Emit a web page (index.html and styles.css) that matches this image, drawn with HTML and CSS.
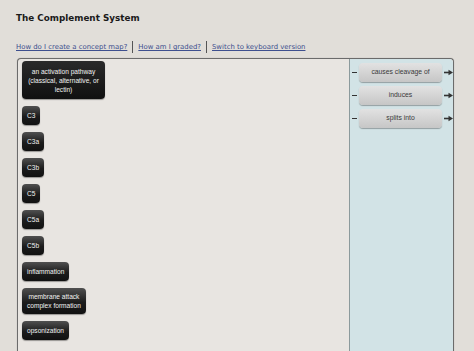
FILE: index.html
```html
<!DOCTYPE html>
<html>
<head>
<meta charset="utf-8">
<link rel="stylesheet" href="styles.css">
</head>
<body>
<div class="page">
  <h1 class="title">The Complement System</h1>
  <div class="links">
    <a href="#">How do I create a concept map?</a><span class="sep"></span><a href="#">How am I graded?</a><span class="sep"></span><a href="#">Switch to keyboard version</a>
  </div>
  <div class="board">
    <div class="canvas">
      <div class="node big">an activation pathway<br>(classical, alternative, or<br>lectin)</div>
      <div class="node">C3</div>
      <div class="node">C3a</div>
      <div class="node">C3b</div>
      <div class="node">C5</div>
      <div class="node">C5a</div>
      <div class="node">C5b</div>
      <div class="node">inflammation</div>
      <div class="node two">membrane attack<br>complex formation</div>
      <div class="node">opsonization</div>
    </div>
    <div class="tray">
      <div class="link"><span class="dash"></span><span class="pill">causes cleavage of</span><svg class="arrow" viewBox="0 0 9 7" width="9" height="7"><path d="M0 3.5H6" stroke="#333" stroke-width="1.6"/><polygon points="4.5,0.8 9,3.5 4.5,6.2" fill="#333"/></svg></div>
      <div class="link"><span class="dash"></span><span class="pill">induces</span><svg class="arrow" viewBox="0 0 9 7" width="9" height="7"><path d="M0 3.5H6" stroke="#333" stroke-width="1.6"/><polygon points="4.5,0.8 9,3.5 4.5,6.2" fill="#333"/></svg></div>
      <div class="link"><span class="dash"></span><span class="pill">splits into</span><svg class="arrow" viewBox="0 0 9 7" width="9" height="7"><path d="M0 3.5H6" stroke="#333" stroke-width="1.6"/><polygon points="4.5,0.8 9,3.5 4.5,6.2" fill="#333"/></svg></div>
    </div>
  </div>
</div>
</body>
</html>
```
FILE: styles.css
```css
html, body {
  margin: 0;
  padding: 0;
  background: #e1ded9;
  height: 100%;
  overflow: hidden;
}
.page {
  padding: 12px 0 0 16px;
  font-family: "DejaVu Sans", Verdana, sans-serif;
}
.title {
  margin: 0;
  font-size: 8.8px;
  font-weight: bold;
  color: #1a1a1a;
  line-height: 12px;
}
.links {
  margin-top: 17px;
  display: flex;
  align-items: center;
  font-size: 6.9px;
  line-height: 10px;
}
.links a {
  color: #3d4f8e;
  text-decoration: underline;
}
.sep {
  display: inline-block;
  width: 1px;
  height: 12px;
  background: #555;
  margin: 0 5px;
}
.board {
  margin: 5px 0 0 1px;
  width: 435px;
  height: 292px;
  border: 1px solid #6b6b6b;
  border-bottom: none;
  border-radius: 4px 4px 0 0;
  display: flex;
  background: #e8e5e1;
  box-shadow: 0 0 1px rgba(0,0,0,0.3);
}
.canvas {
  flex: 1;
  padding: 2px 0 0 4px;
  display: flex;
  flex-direction: column;
  align-items: flex-start;
  gap: 7px;
  font-family: "Liberation Sans", Arial, sans-serif;
}
.node {
  background: linear-gradient(#505050, #1c1c1c 55%, #111);
  color: #f2f2f2;
  font-size: 6.6px;
  line-height: 9px;
  border-radius: 4px;
  padding: 5px 5px;
  text-align: center;
  box-shadow: 0 1px 1px rgba(0,0,0,0.35);
}
.node.big {
  width: 75px;
  padding: 6px 4px 5px;
  background: linear-gradient(#2a2a2a, #101010);
}
.node.two {
  padding: 4px 5px;
}
.tray {
  width: 103px;
  background: #d2e3e6;
  border-left: 1px solid #8b9a9c;
  border-radius: 0 4px 0 0;
  padding-top: 4px;
  display: flex;
  flex-direction: column;
  gap: 4px;
  font-family: "Liberation Sans", Arial, sans-serif;
}
.link {
  display: flex;
  align-items: center;
  height: 19px;
}
.dash {
  width: 5px;
  height: 1.5px;
  background: #333;
  margin: 0 2px 0 2px;
  flex: none;
}
.pill {
  flex: none;
  width: 83px;
  height: 19px;
  line-height: 18px;
  text-align: center;
  font-size: 6.8px;
  color: #3a3a3a;
  border-radius: 4px;
  background: linear-gradient(#e2e2e2, #c6c6c6);
  box-shadow: 0 1px 1px rgba(0,0,0,0.3);
}
.arrow {
  flex: none;
  margin-left: 2px;
  overflow: visible;
}
```
